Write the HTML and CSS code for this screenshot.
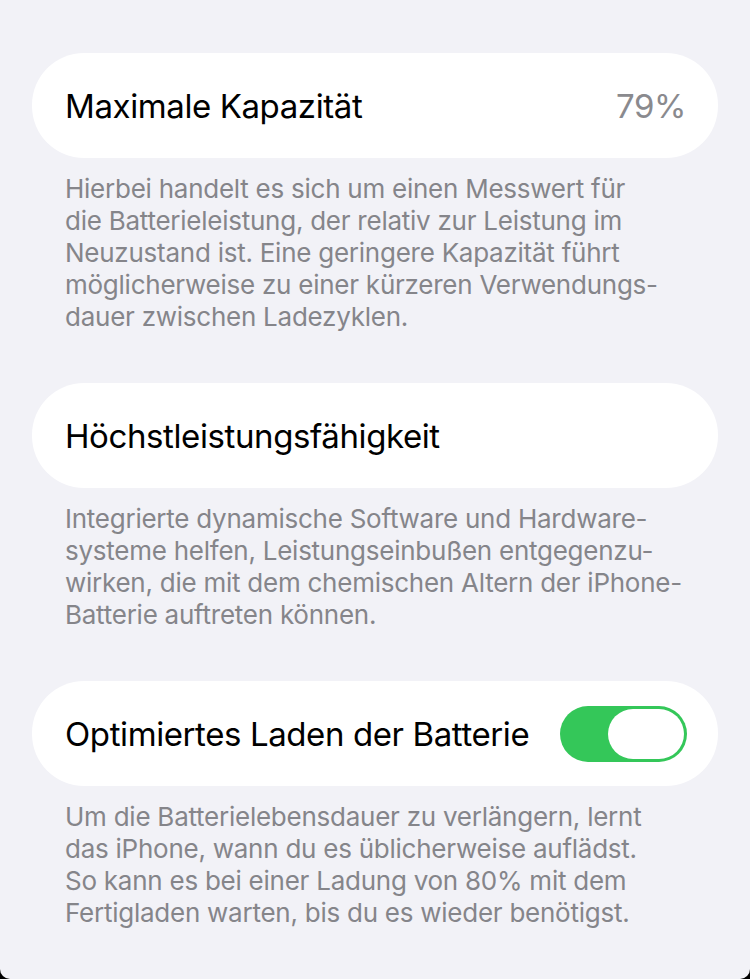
FILE: index.html
```html
<!DOCTYPE html>
<html lang="de">
<head>
    <meta charset="UTF-8">
    <meta name="viewport" content="width=device-width, initial-scale=1.0">
    <title>Batteriezustand</title>
    <link rel="stylesheet" href="styles.css">
</head>
<body>

    <div class="screen">

        <div class="group">
            <div class="cell">
                <span class="cell-label">Maximale Kapazität</span>
                <span class="cell-value">79%</span>
            </div>
            <p class="footer">
                Hierbei handelt es sich um einen Messwert für<br>
                die Batterieleistung, der relativ zur Leistung im<br>
                Neuzustand ist. Eine geringere Kapazität führt<br>
                möglicherweise zu einer kürzeren Verwendungs-<br>
                dauer zwischen Ladezyklen.
            </p>
        </div>

        <div class="group">
            <div class="cell">
                <span class="cell-label">Höchstleistungsfähigkeit</span>
            </div>
            <p class="footer">
                Integrierte dynamische Software und Hardware-<br>
                systeme helfen, Leistungseinbußen entgegenzu-<br>
                wirken, die mit dem chemischen Altern der iPhone-<br>
                Batterie auftreten können.
            </p>
        </div>

        <div class="group">
            <div class="cell">
                <span class="cell-label">Optimiertes Laden der Batterie</span>
                <span class="switch on"><span class="knob"></span></span>
            </div>
            <p class="footer">
                Um die Batterielebensdauer zu verlängern, lernt<br>
                das iPhone, wann du es üblicherweise auflädst.<br>
                So kann es bei einer Ladung von 80% mit dem<br>
                Fertigladen warten, bis du es wieder benötigst.
            </p>
        </div>

    </div>

</body>
</html>
```

FILE: styles.css
```css
/* Global styles */
html {
    background-color: #000;
}

body {
    font-family: 'Inter', 'Noto Sans', sans-serif;
    margin: 0;
    padding: 0;
    -webkit-font-smoothing: antialiased;
}

.screen {
    height: 979px;
    box-sizing: border-box;
    background-color: #f2f2f7;
    border-radius: 0 0 10px 10px;
    padding: 53px 32px 0 32px;
    overflow: hidden;
}

/* Grouped list sections */
.group {
    margin-bottom: 50px;
}

.cell {
    display: flex;
    justify-content: space-between;
    align-items: center;
    height: 105px;
    padding: 0 32px 0 33px;
    background-color: #fff;
    border-radius: 52px;
}

.cell-label {
    font-size: 33px;
    color: #000;
    letter-spacing: -0.4px;
}

.cell-value {
    font-size: 33px;
    color: #8a8a8e;
    letter-spacing: -0.4px;
}

/* Lines are broken by hand, as in the system text */
.footer {
    margin: 15px 0 0 0;
    padding: 0 0 0 33px;
    font-size: 26px;
    line-height: 32px;
    color: #85858a;
    letter-spacing: -0.25px;
    white-space: nowrap;
}

/* Toggle switch */
.switch {
    display: flex;
    align-items: center;
    justify-content: flex-end;
    width: 127px;
    height: 56px;
    box-sizing: border-box;
    padding: 3px;
    border-radius: 28px;
    background-color: #e9e9eb;
    margin-right: -1px;
}

.switch.on {
    background-color: #34c759;
}

.switch .knob {
    width: 76px;
    height: 50px;
    border-radius: 25px;
    background-color: #fff;
}
```
